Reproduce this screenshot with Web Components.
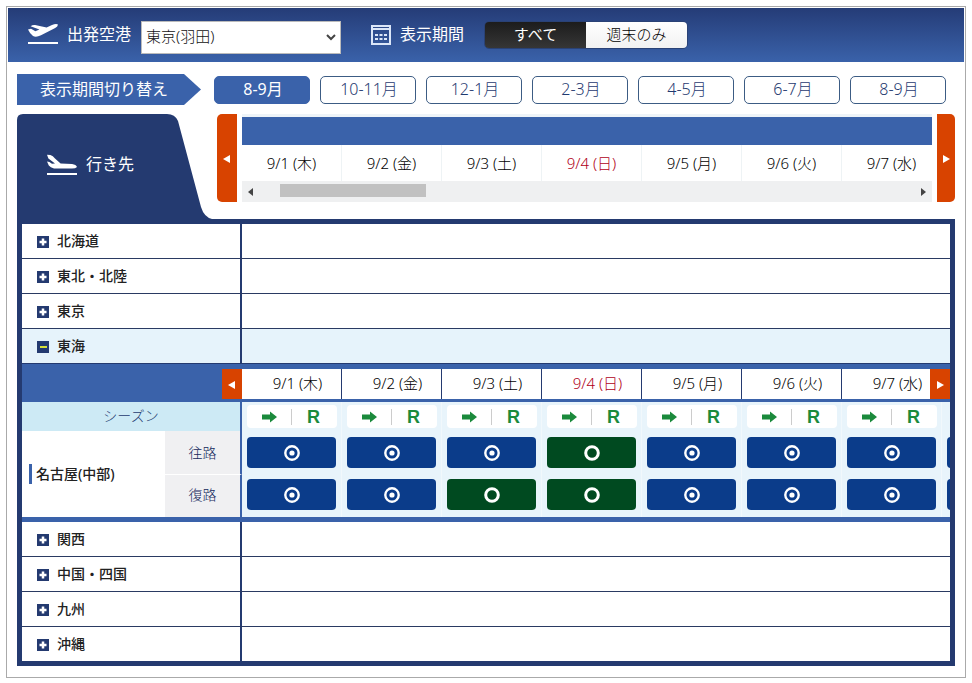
<!DOCTYPE html>
<html lang="ja">
<head>
<meta charset="utf-8">
<title>空席カレンダー</title>
<style>
body {
  margin: 6px;
  background: #fff;
  color: #222;
  font-family: "Noto Sans", "Noto Sans CJK JP", sans-serif;
  font-size: 14px;
  line-height: 20px;
}
</style>
</head>
<body>
<flight-app></flight-app>
<script>
const define = (name, html, setup) => {
  const template = document.createElement('template');
  template.innerHTML = html;
  customElements.define(name, class extends HTMLElement {
    constructor() {
      super();
      this.attachShadow({ mode: 'open' }).append(template.content.cloneNode(true));
    }
    connectedCallback() {
      if (setup) setup(this, this.shadowRoot);
    }
  });
};

const base = `*{box-sizing:border-box}button,select{font:inherit;margin:0;padding:0;border:0;cursor:pointer}svg{display:block}`;

/* Plane icons: taking off and landing */
define('plane-icon', `<style>${base}
:host{display:block;width:32px;flex:none;color:#fff}
svg{width:32px;height:24px}
:host([kind=landing]) .off,:host(:not([kind=landing])) .land{display:none}
</style>
<svg class="off" viewBox="0 0 32 24" fill="currentColor" aria-hidden="true">
<path d="M1 6.600 4 5.800 8.400 8.200 12.400 6.400 3.600 3.200Q5.400 1.800 8 2L19.600 4.600 25 2Q28.600 .6 31 1.400 30.800 3.400 28.200 5L14 12.200Q9.200 14.600 6 13 3 11.200 1 6.600Z"/><rect x="1" y="19" width="30" height="2"/></svg>
<svg class="land" viewBox="0 0 32 24" fill="currentColor" aria-hidden="true">
<path d="M1 0.800 4.400 1Q7 2 9 4.400L14.600 9.600 26 10Q30.200 10.600 31 13 29.600 14.600 26 14.600L8 14.400Q4.400 13.800 2.800 11.600L1 7.600 3.400 8 6 9.800 9 9.400 2.400 4.600Z"/><rect x="1" y="19" width="30" height="2"/></svg>`);

/* Blue bar with the departure airport and the period filter */
define('search-bar', `<style>${base}
:host{display:flex;align-items:center;height:54px;padding:0 19px;background:linear-gradient(#253c77,#3a62aa);color:#fff;font-size:16px}
label,.caption{white-space:nowrap;padding-bottom:2px}
label{margin:0 10px 0 8px}
select{width:200px;height:33px;margin-top:5px;padding:0 18px 3px 4px;border:1px solid #bbb;background:#fff;color:#111;font-size:15px;font-weight:300;appearance:none}
.pick{position:relative;margin-right:30px}
.pick svg{position:absolute;right:5px;top:18px;width:10px;height:7px;pointer-events:none}
.cal{width:20px;height:20px;flex:none;margin-right:9px}
.seg{display:flex;margin-left:20px;border-radius:5px;overflow:hidden;border:1px solid #2a4276;height:28px}
.seg button{width:101px;padding-bottom:2px;font-size:15px;background:linear-gradient(#fff,#f2f2f2);color:#000;font-weight:300}
.seg .on{background:linear-gradient(#1c1c1c,#363636);color:#fff;font-weight:400}
</style>
<plane-icon></plane-icon>
<label for="airport">出発空港</label>
<div class="pick"><select id="airport"><option>東京(羽田)</option></select>
<svg viewBox="0 0 10 7"><path d="M1 1l4 4 4-4" fill="none" stroke="#444" stroke-width="2"/></svg></div>
<svg class="cal" viewBox="0 0 20 20" aria-hidden="true"><path d="M1 1h18v18H1zM1 4h18" fill="none" stroke="#dbe6f8" stroke-width="2"/><path d="M4 9h3v2H4zM8.500 9h3v2h-3zM13 9h3v2h-3zM4 13h3v2H4zM8.500 13h3v2h-3zM13 13h3v2h-3z" fill="#dbe6f8"/></svg>
<span class="caption">表示期間</span>
<div class="seg"><button class="on" aria-pressed="true">すべて</button><button aria-pressed="false">週末のみ</button></div>`);

define('month-button', `<style>${base}
:host{display:block;flex:1 1 0;min-width:0}
button{width:100%;height:28px;padding:0 0 2px 2px;border:1px solid #3c5c84;border-radius:5px;background:#fff;color:#1f3a70;font-size:16px;font-weight:300;line-height:24px}
:host([active]) button{background:#3a62aa;border-color:#3a62aa;color:#fff;font-weight:400}
</style><button><slot></slot></button>`);

define('month-nav', `<style>${base}
:host{display:flex;align-items:center;gap:10px;padding:12px 18px 9px 9px}
h2{flex:none;width:184px;height:31px;margin:0 3px 0 0;padding-left:23px;background:#3a62aa;color:#fff;font-size:16px;font-weight:400;line-height:30px;clip-path:polygon(0 0,167px 0,100% 50%,167px 100%,0 100%)}
</style><h2>表示期間切り替え</h2><slot></slot>`);

/* Orange paging button; dir is prev or next */
define('page-button', `<style>${base}
:host{display:block}
button{display:grid;place-items:center;width:100%;height:100%;padding-top:2px;background:#d84300;border-radius:var(--radius,0)}
svg{width:8px;height:10px}
:host([dir=prev]) svg{transform:scaleX(-1)}
</style><button><svg viewBox="0 0 8 10"><path d="M1 1l7 4-7 4z" fill="#fff"/></svg></button>`,
(el, root) => root.querySelector('button').setAttribute('aria-label', el.getAttribute('dir') === 'next' ? '次へ' : '前へ'));

const days = ['9/1 (木)', '9/2 (金)', '9/3 (土)', '9/4 (日)', '9/5 (月)', '9/6 (火)', '9/7 (水)'];

/* Date strip above the table with its scroll bar */
define('date-strip', `<style>${base}
:host{display:grid;grid-template-columns:20px minmax(0,1fr) 18px;column-gap:5px;height:88px}
.mid{padding-top:3px;background:#eef4f8}
.bar{height:28px;background:#3a62aa}
.days{display:flex;height:36px;overflow:hidden;background:#fff;color:#000;font-size:15px;font-weight:300}
.days span{flex:none;width:100px;border-right:1px solid #eef3f5;text-align:center;line-height:37px}
.days .red{color:#b00018}
.scroll{display:flex;align-items:center;height:21px;padding:0 6px;background:#eff0f1}
.track{flex:1;height:13px;margin:0 20px 0 27px}
.thumb{width:146px;height:13px;margin-top:-1px;background:#c1c1c1}
.scroll svg{width:5px;height:8px}
.prev{--radius:5px 0 0 5px}.next{--radius:0 5px 5px 0}
</style>
<page-button class="prev" dir="prev"></page-button>
<div class="mid"><div class="bar"></div><div class="days"></div>
<div class="scroll"><svg viewBox="0 0 5 8"><path d="M5 0v8L0 4z" fill="#444"/></svg><div class="track"><div class="thumb"></div></div><svg viewBox="0 0 5 8"><path d="M0 0v8l5-4z" fill="#444"/></svg></div></div>
<page-button class="next" dir="next"></page-button>`,
(el, root) => {
  root.querySelector('.days').innerHTML = days.map((d, i) => `<span${i === 3 ? ' class="red"' : ''}>${d}</span>`).join('');
});

define('destination-tab', `<style>${base}
:host{display:flex;align-items:flex-start;width:195px;height:105px;padding:40px 0 0 29px;color:#fff;font-size:16px;position:relative}
.shape{position:absolute;inset:0;width:195px;height:105px}
plane-icon,h2{position:relative}
h2{margin:0 0 0 8px;font-size:16px;font-weight:400;line-height:20px}
</style>
<svg class="shape" viewBox="0 0 195 105" aria-hidden="true"><path d="M0 105V6Q0 0 6 0H150Q158 0 161 7L184 93Q187 103 195 105Z" fill="#243a70"/></svg>
<plane-icon kind="landing"></plane-icon><h2>行き先</h2>`);

/* One region line of the accordion */
define('region-row', `<style>${base}
:host{display:grid;grid-template-columns:220px minmax(0,1fr);height:35px;border-bottom:1px solid #2a3a62;background:#fff}
:host([open]){background:#e6f3fb;border-color:#243a70}
:host([last]){height:34px;border-bottom:0}
button{display:flex;align-items:center;gap:8px;padding:0 0 0 15px;border-right:2px solid #243a70;background:none;color:#222;font-weight:500;text-align:left}
svg{width:12px;height:12px;margin-top:2px;flex:none}
:host([open]) .plus,:host(:not([open])) .minus{display:none}
</style>
<button><svg class="plus" viewBox="0 0 12 12"><path d="M0 0h12v12H0z" fill="#243a70"/><path d="M2.500 6h7M6 2.500v7" stroke="#fff" stroke-width="2.500"/></svg><svg class="minus" viewBox="0 0 12 12"><path d="M0 0h12v12H0z" fill="#243a70"/><path d="M3 6h7" stroke="#d7e03a" stroke-width="2"/></svg><slot></slot></button><div></div>`,
(el, root) => root.querySelector('button').setAttribute('aria-expanded', el.hasAttribute('open')));

/* Season badge: arrow for the fare direction, R for the season letter */
define('season-badge', `<style>${base}
:host{display:grid;grid-template-columns:44px 1px 43px;align-items:center;justify-items:center;width:90px;height:23px;margin-left:5px;border-radius:4px;background:#fff}
svg{width:15px;height:12px}
i{width:1px;height:16px;background:#ccc}
b{color:#1b8a3c;padding-top:2px;font:700 18px/21px "Liberation Sans",Arial,sans-serif}
</style>
<svg viewBox="0 0 15 12" aria-hidden="true"><path d="M0 3.500h8V0.500L15 6 8 11.500V8.500H0z" fill="#1b8a3c"/></svg><i></i><b>R</b>`);

/* Availability: "many" is a double circle, "few" a single one */
define('seat-button', `<style>${base}
:host{display:block;width:89px;margin-left:5px}
button{display:grid;place-items:center;width:100%;height:31px;border-radius:4px;background:#0b3c8a}
svg{width:16px;height:16px}
:host([few]) button{background:#004a20}
:host([few]) .many,:host(:not([few])) .few{display:none}
</style>
<button><svg viewBox="0 0 16 16"><g class="many"><circle cx="8" cy="8" r="6.700" fill="none" stroke="#fff" stroke-width="2.400"/><circle cx="8" cy="8" r="2.600" fill="#fff"/></g><circle class="few" cx="8" cy="8" r="6.300" fill="none" stroke="#fff" stroke-width="3"/></svg></button>`,
(el, root) => root.querySelector('button').setAttribute('aria-label', el.hasAttribute('few') ? '残りわずか' : '空席あり'));

define('fare-table', `<style>${base}
:host{display:block;position:relative;overflow:hidden;border-bottom:5px solid #3a62aa;background:#e8f4fb}
table{width:1020px;table-layout:fixed;border-spacing:0;border-collapse:separate}
td,th{padding:0;font-weight:300}
.head th{height:38px;border:solid #3a62aa;border-width:5px 0 3px;background:#fff;color:#000;text-align:center}
.head .date{padding:0 0 2px 11px;font-size:15px;background:linear-gradient(#243a70,#243a70) right/1px 100% no-repeat #fff}
.head .date.red{color:#b00018}
.head .blank{background:#3a62aa}
.season th{height:29px;padding-bottom:2px;background:#cdeaf5;color:#1f3a70}
.season td{background:#e8f4fb}
th.line{border-right:2px solid #3a62aa}
.city{background:#fff;text-align:left;color:#222}
.city span{display:block;margin-left:7px;padding-left:4px;border-left:3px solid #3a62aa;font-weight:500;white-space:nowrap}
.way{height:43px;background:#f0f0f2;color:#14285c}
.back .way{padding-bottom:2px;border-top:1px solid #fff}
td{border-right:1px solid #f1f8fc}
.go td{vertical-align:top;padding-top:6px}
.back td{vertical-align:top;padding-top:5px}
page-button{position:absolute;top:5px;width:20px;height:30px}
.prev{left:200px}.next{right:0}
</style>
<table><colgroup><col style="width:143px"><col style="width:77px"><col span="8" style="width:100px"></colgroup>
<tr class="head"><th class="blank" colspan="2"></th></tr>
<tr class="season"><th class="line" colspan="2" scope="row">シーズン</th></tr>
<tr class="go"><th class="city" rowspan="2" scope="rowgroup"><span>名古屋(中部)</span></th><th class="way line" scope="row">往路</th></tr>
<tr class="back"><th class="way line" scope="row">復路</th></tr></table>
<page-button class="prev" dir="prev"></page-button><page-button class="next" dir="next"></page-button>`,
(el, root) => {
  const add = (row, html) => root.querySelector(row).insertAdjacentHTML('beforeend', html);
  for (let i = 0; i < 8; i++) {
    add('.head', `<th scope="col" class="date${i === 3 ? ' red' : ''}">${days[i] || ''}</th>`);
    add('.season', i < 7 ? '<td><season-badge></season-badge></td>' : '<td></td>');
    add('.go', `<td><seat-button${i === 3 ? ' few' : ''}></seat-button></td>`);
    add('.back', `<td><seat-button${i === 2 || i === 3 ? ' few' : ''}></seat-button></td>`);
  }
});

define('flight-app', `<style>${base}
:host{display:block;border:1px solid #aaa;padding:1px}
.top{display:grid;grid-template-columns:195px minmax(0,1fr);column-gap:5px;margin:0 9px}
.list{margin:0 9px 10px;border:5px solid #243a70}
</style>
<search-bar></search-bar>
<month-nav><month-button active>8-9月</month-button><month-button>10-11月</month-button><month-button>12-1月</month-button><month-button>2-3月</month-button><month-button>4-5月</month-button><month-button>6-7月</month-button><month-button>8-9月</month-button></month-nav>
<div class="top"><destination-tab></destination-tab><date-strip></date-strip></div>
<div class="list">
<region-row>北海道</region-row><region-row>東北・北陸</region-row><region-row>東京</region-row><region-row open>東海</region-row>
<fare-table></fare-table>
<region-row>関西</region-row><region-row>中国・四国</region-row><region-row>九州</region-row><region-row last>沖縄</region-row>
</div>`);
</script>
</body>
</html>
